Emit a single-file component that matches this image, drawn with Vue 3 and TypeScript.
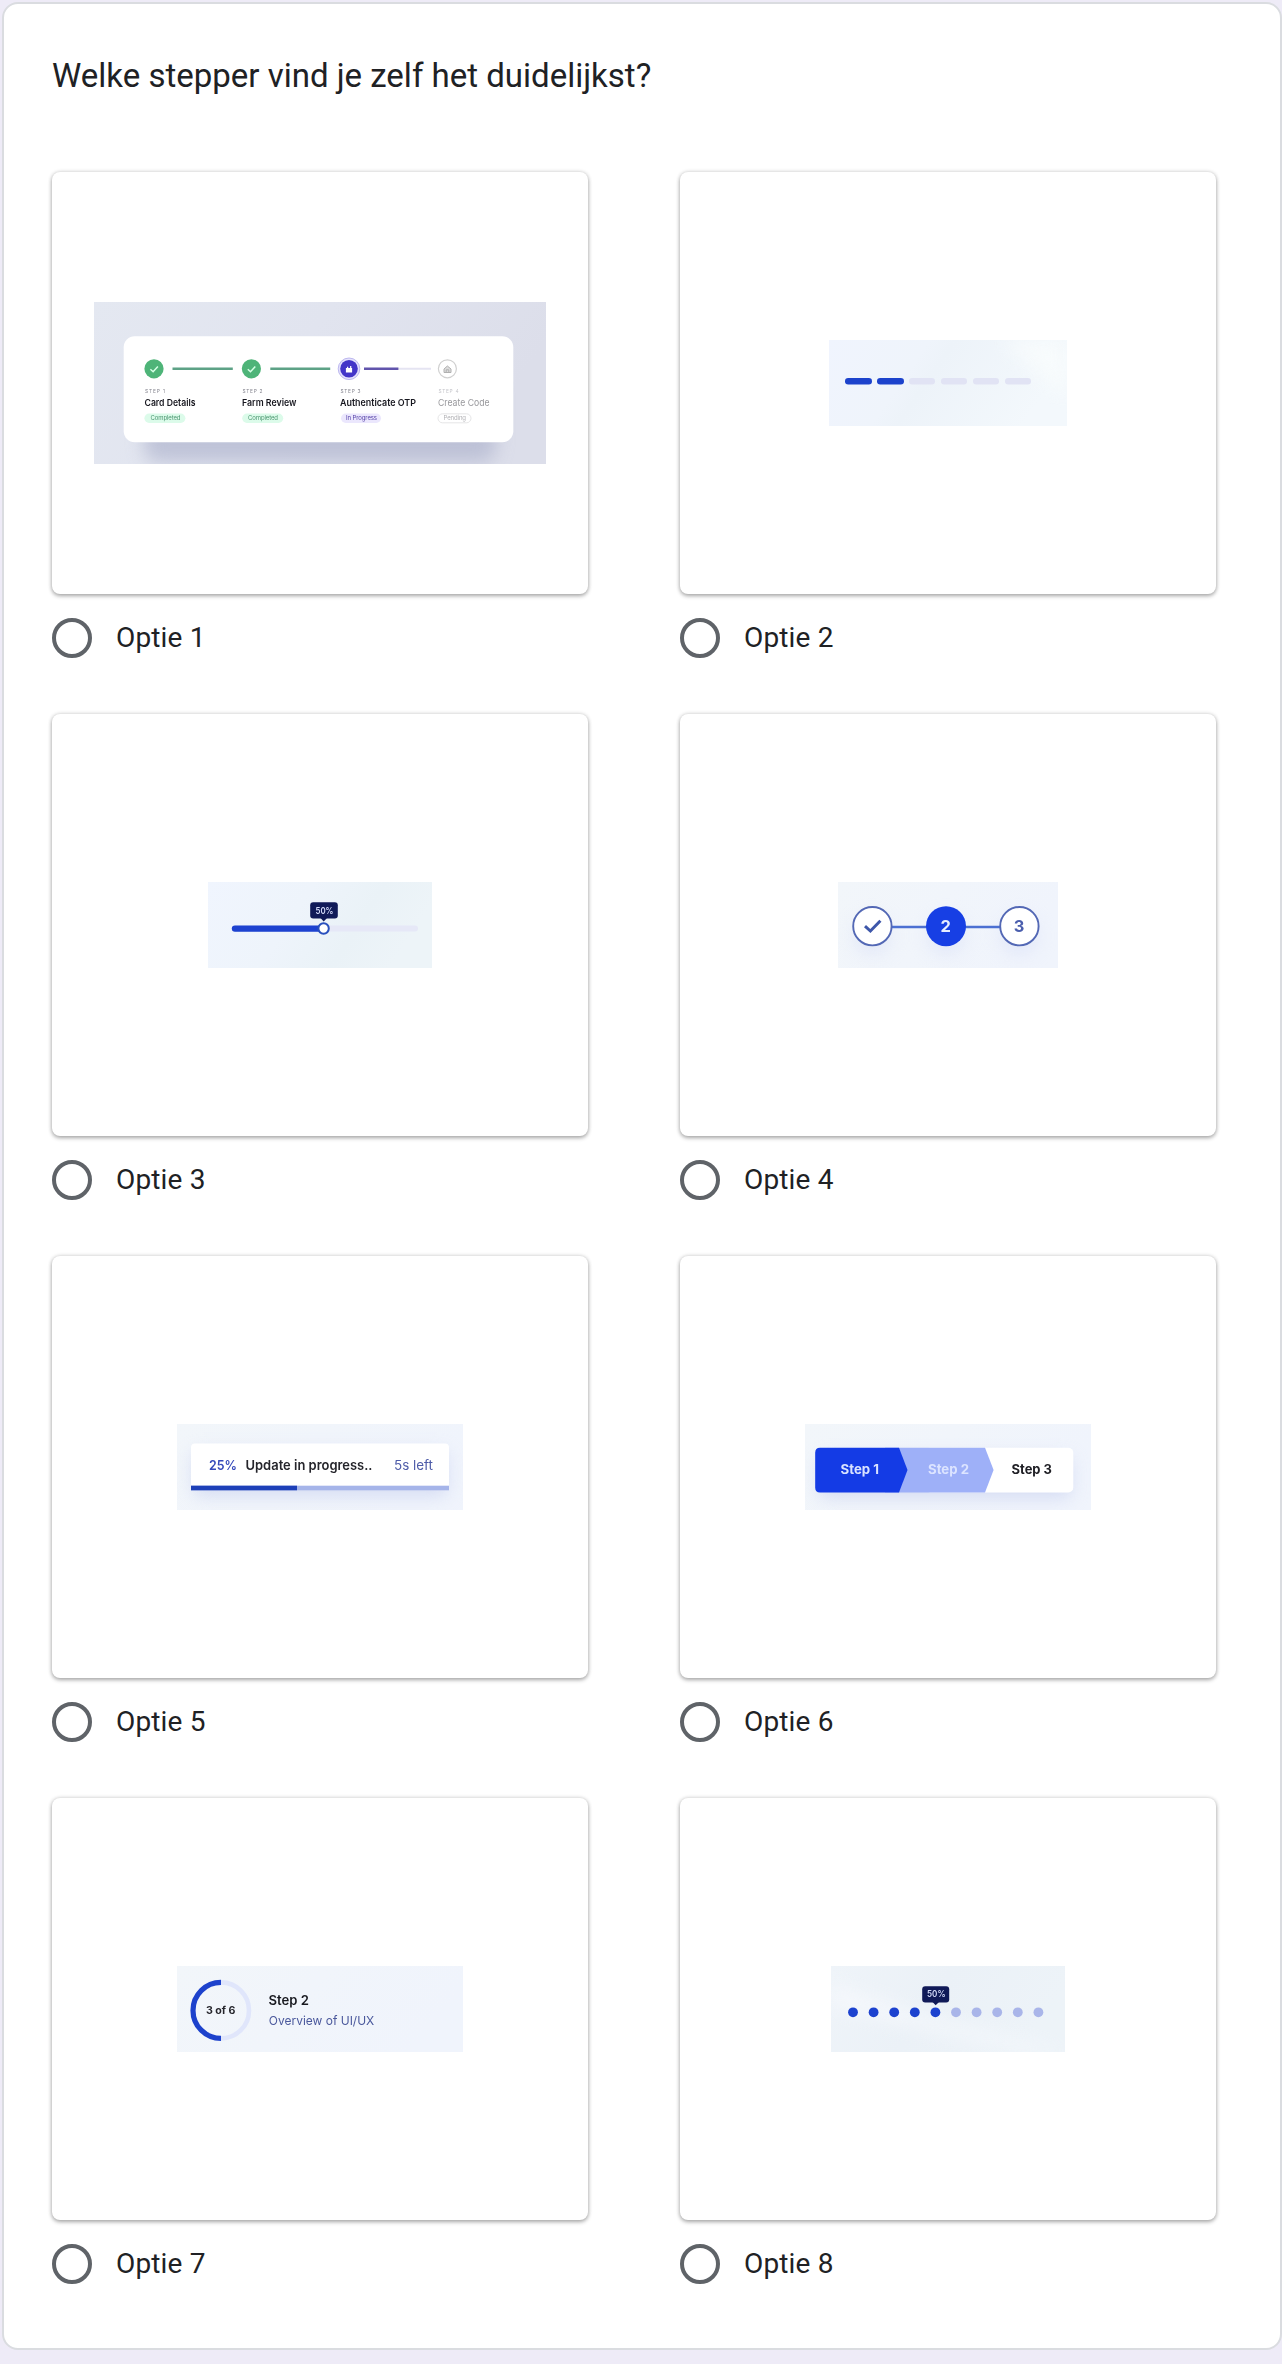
<script setup lang="ts">
interface Option {
  id: number
  width: number
  height: number
}

const options: Option[] = [
  { id: 1, width: 452, height: 162 },
  { id: 2, width: 238, height: 86 },
  { id: 3, width: 224, height: 86 },
  { id: 4, width: 220, height: 86 },
  { id: 5, width: 286, height: 86 },
  { id: 6, width: 286, height: 86 },
  { id: 7, width: 286, height: 86 },
  { id: 8, width: 234, height: 86 },
]

const bars = [16, 48, 80, 112, 144, 176]
const dots = [22, 42.6, 63.2, 83.8, 104.4, 125, 145.6, 166.2, 186.8, 207.4]
</script>

<template>
  <main class="page">
    <section class="question">
      <h1 class="title">Welke stepper vind je zelf het duidelijkst?</h1>
      <div class="grid">
        <div v-for="o in options" :key="o.id" class="option">
          <div class="picture">
            <svg :width="o.width" :height="o.height" :viewBox="`0 0 ${o.width} ${o.height}`">
              <defs>
                <linearGradient :id="`bg${o.id}`" x1="0" y1="0" x2="1" y2="0.25">
                  <template v-if="o.id === 1">
                    <stop offset="0" stop-color="#e4e8f1" />
                    <stop offset="0.5" stop-color="#e1e4ef" />
                    <stop offset="1" stop-color="#dcdeea" />
                  </template>
                  <template v-else-if="o.id === 2">
                    <stop offset="0" stop-color="#f0f4fe" />
                    <stop offset="0.4" stop-color="#eff4fb" />
                    <stop offset="0.5" stop-color="#edf3f9" />
                    <stop offset="1" stop-color="#f3f8fc" />
                  </template>
                  <template v-else-if="o.id === 3">
                    <stop offset="0" stop-color="#f0f5fe" />
                    <stop offset="0.45" stop-color="#eef4fb" />
                    <stop offset="0.75" stop-color="#eaf2f7" />
                    <stop offset="1" stop-color="#edf4f8" />
                  </template>
                  <template v-else-if="o.id === 8">
                    <stop offset="0" stop-color="#eff4f9" />
                    <stop offset="0.5" stop-color="#ebf1f7" />
                    <stop offset="1" stop-color="#edf3f8" />
                  </template>
                  <template v-else>
                    <stop offset="0" stop-color="#f2f6fa" />
                    <stop offset="1" stop-color="#f0f4fc" />
                  </template>
                </linearGradient>
                <filter :id="`soft${o.id}`" x="-5%" y="-20%" width="110%" height="140%" color-interpolation-filters="sRGB">
                  <feGaussianBlur stdDeviation="0.65" />
                </filter>
                <filter :id="`glow${o.id}`" x="-30%" y="-60%" width="160%" height="220%" color-interpolation-filters="sRGB">
                  <feGaussianBlur stdDeviation="9" />
                </filter>
              </defs>
              <rect :width="o.width" :height="o.height" :fill="`url(#bg${o.id})`" />

              <template v-if="o.id === 1">
                <rect x="50" y="76" width="352" height="84" rx="14" fill="#b0b5ce" opacity="0.7" filter="url(#glow1)" />
                <g filter="url(#soft1)">
                  <rect x="29.7" y="34.2" width="389.6" height="106" rx="11" fill="#fff" />
                  <g stroke-width="2.6" fill="none">
                    <path d="M78.5 66.8H138.8M176.3 66.8H236.2" stroke="#5da286" />
                    <path d="M304 66.8H337" stroke="#e5e4f2" stroke-width="2" />
                    <path d="M270 66.8H304.4" stroke="#6154ac" />
                  </g>
                  <circle cx="60" cy="66.8" r="9.6" fill="#4eb478" />
                  <circle cx="157.4" cy="66.8" r="9.6" fill="#4eb478" />
                  <path d="M56.4 67.3L59.1 69.8L63.9 64.6M153.8 67.3L156.5 69.8L161.3 64.6" fill="none" stroke="#d4ffe5" stroke-width="1.5" />
                  <circle cx="255" cy="66.8" r="10.8" fill="#e4e1fc" stroke="#bdb8ef" stroke-width="1" />
                  <circle cx="255" cy="66.8" r="8.8" fill="#4335c8" />
                  <path d="M251.9 66H258.1V70.5H251.9ZM253 66V64.8H254.2V66M256.1 66V64H257.3V66" fill="#fff" />
                  <circle cx="353.4" cy="66.8" r="9" fill="#fff" stroke="#d0d0d0" stroke-width="1.2" />
                  <path d="M350 67L353.4 64L357 67V70.5H350ZM352.2 70V67.8H354.8V70" fill="#ddd" stroke="#b0b0b0" stroke-width="1" />
                  <g class="plain" fill="#85858f" font-size="4.8">
                    <text x="51" y="91.2" textLength="20">STEP 1</text>
                    <text x="148.5" y="91.2" textLength="20">STEP 2</text>
                    <text x="246.5" y="91.2" textLength="20">STEP 3</text>
                    <text x="344.5" y="91.2" textLength="20" fill="#c5c5ca">STEP 4</text>
                  </g>
                  <g class="medium" font-size="9.4" fill="#16161e">
                    <text x="50.5" y="103.9" textLength="51" lengthAdjust="spacingAndGlyphs">Card Details</text>
                    <text x="148" y="103.9" textLength="54.5" lengthAdjust="spacingAndGlyphs">Farm Review</text>
                    <text x="246" y="103.9" textLength="76" lengthAdjust="spacingAndGlyphs">Authenticate OTP</text>
                    <text x="344" y="103.9" textLength="51.5" lengthAdjust="spacingAndGlyphs" class="plain" fill="#98989c">Create Code</text>
                  </g>
                  <rect x="50.4" y="111.6" width="41" height="9.4" rx="4.7" fill="#dcfbea" />
                  <rect x="148.2" y="111.6" width="41" height="9.4" rx="4.7" fill="#dcfbea" />
                  <rect x="247" y="111.6" width="40" height="9.4" rx="4.7" fill="#ebe7fd" />
                  <rect x="344" y="111.8" width="33" height="9" rx="4.5" fill="#fff" stroke="#dedee0" stroke-width="0.8" />
                  <g class="plain" font-size="6">
                    <text x="56.5" y="118.4" textLength="30" fill="#4b9670">Completed</text>
                    <text x="154" y="118.4" textLength="30" fill="#4b9670">Completed</text>
                    <text x="252" y="118.4" textLength="31" fill="#5642a8">In Progress</text>
                    <text x="349.5" y="118.4" textLength="22.5" fill="#b0b0b4">Pending</text>
                  </g>
                </g>
              </template>

              <template v-else-if="o.id === 2">
                <path d="M172 0H238V58Z" fill="#fafdfd" opacity="0.75" filter="url(#glow2)" />
                <g filter="url(#soft2)">
                  <rect v-for="(x, i) in bars" :key="x" :x="x" y="38" :width="i < 2 ? 27 : 26" height="6.4" rx="3.2" :fill="i < 2 ? '#1c42cc' : '#e1e3f4'" />
                </g>
              </template>

              <g v-else-if="o.id === 3" filter="url(#soft3)">
                <path d="M27 46.6H207" stroke="#e6e8f7" stroke-width="6" stroke-linecap="round" />
                <path d="M27 46.6H115" stroke="#1d42d0" stroke-width="6.4" stroke-linecap="round" />
                <rect x="102.2" y="20.3" width="27.6" height="16.2" rx="3" fill="#101a58" />
                <path d="M112.5 36H119L115.7 39.5Z" fill="#101a58" />
                <text x="107.5" y="31.8" class="medium" font-size="9" textLength="18" lengthAdjust="spacingAndGlyphs" fill="#d5dcfa">50%</text>
                <circle cx="115.6" cy="46.5" r="5.2" fill="#fff" stroke="#2950bd" stroke-width="2" />
              </g>

              <template v-else-if="o.id === 4">
                <g fill="#d5dcf5" opacity="0.5" filter="url(#glow4)">
                  <circle cx="34" cy="54" r="19" /><circle cx="108" cy="54" r="19" /><circle cx="181" cy="54" r="19" />
                </g>
                <g filter="url(#soft4)">
                  <path d="M53 45H163" stroke="#4c70d2" stroke-width="2.4" />
                  <circle cx="34.4" cy="44.2" r="19.2" fill="#fff" stroke="#5368b5" stroke-width="1.9" />
                  <circle cx="108" cy="44.2" r="20" fill="#173fe4" />
                  <circle cx="181.4" cy="44.2" r="19.2" fill="#fff" stroke="#5368b5" stroke-width="1.9" />
                  <path d="M27 44.2L32.4 49L42.4 38.8" fill="none" stroke="#3e57aa" stroke-width="3" />
                  <g class="bold" font-size="16.5" text-anchor="middle">
                    <text x="107.8" y="50" fill="#e6ecff">2</text>
                    <text x="181.2" y="50" fill="#4b5fae">3</text>
                  </g>
                </g>
              </template>

              <template v-else-if="o.id === 5">
                <rect x="16" y="28" width="254" height="44" rx="5" fill="#ccd4f0" opacity="0.75" filter="url(#glow5)" />
                <g filter="url(#soft5)">
                  <path d="M14 66V23.5Q14 19.5 18 19.5H268Q272 19.5 272 23.5V66Z" fill="#fff" />
                  <rect x="14" y="61.7" width="258" height="4.6" fill="#a5b4e9" />
                  <rect x="14" y="61.7" width="106" height="4.6" fill="#1d40b8" />
                  <text x="32" y="46.2" class="medium" font-size="13.6" textLength="28" lengthAdjust="spacingAndGlyphs" fill="#3549ba">25%</text>
                  <text x="68.5" y="46.2" class="medium" font-size="13.6" textLength="127" lengthAdjust="spacingAndGlyphs" fill="#25252b">Update in progress..</text>
                  <text x="217" y="46.2" class="plain" font-size="13.6" textLength="39" lengthAdjust="spacingAndGlyphs" fill="#4d5ba8">5s left</text>
                </g>
              </template>

              <template v-else-if="o.id === 6">
                <rect x="14" y="34" width="252" height="40" rx="5" fill="#ccd4f0" opacity="0.75" filter="url(#glow6)" />
                <g filter="url(#soft6)">
                  <rect x="120" y="23.7" width="148.3" height="44.8" rx="5" fill="#fff" />
                  <path d="M80 23.7H180L188.6 46.1L180 68.5H80Z" fill="#9eb0f8" />
                  <path d="M15 23.7H94L102.5 46.1L94 68.5H15Q10.2 68.5 10.2 63.5V28.7Q10.2 23.7 15 23.7Z" fill="#143be5" />
                  <g class="bold" font-size="13">
                    <text x="35.5" y="50.3" textLength="38.5" lengthAdjust="spacingAndGlyphs" fill="#d9e3ff">Step 1</text>
                    <text x="123" y="50.3" textLength="41" lengthAdjust="spacingAndGlyphs" fill="#dce4ff">Step 2</text>
                    <text x="206.5" y="50.3" textLength="40.5" lengthAdjust="spacingAndGlyphs" fill="#202026">Step 3</text>
                  </g>
                </g>
              </template>

              <g v-else-if="o.id === 7" filter="url(#soft7)">
                <path d="M44 16.4A28 28 0 0 1 44 72.4" fill="none" stroke="#e0e6fb" stroke-width="4.6" />
                <path d="M44 16.4A28 28 0 0 0 44 72.4" fill="none" stroke="#1d42cc" stroke-width="5.2" />
                <text x="29" y="48" class="bold" font-size="9.8" textLength="29.5" lengthAdjust="spacingAndGlyphs" fill="#25252b">3 of 6</text>
                <text x="91.5" y="39.3" class="medium" font-size="13" textLength="40.5" lengthAdjust="spacingAndGlyphs" fill="#18191f">Step 2</text>
                <text x="91.8" y="58.7" class="plain" font-size="12" textLength="105.5" lengthAdjust="spacingAndGlyphs" fill="#4a589c">Overview of UI/UX</text>
              </g>

              <template v-else>
                <path d="M0 18Q100 55 234 86H200Q100 65 0 40Z" fill="#fbfcff" opacity="0.6" filter="url(#glow8)" />
                <g filter="url(#soft8)">
                  <circle v-for="(x, i) in dots" :key="x" :cx="x" cy="46.3" r="4.9" :fill="i < 5 ? '#1c42cf' : '#a9b5e9'" />
                  <rect x="91.2" y="20.2" width="27" height="16.2" rx="3" fill="#101a58" />
                  <path d="M101.5 36H108L104.7 39.3Z" fill="#101a58" />
                  <text x="96" y="31.4" class="medium" font-size="8.5" textLength="18.5" lengthAdjust="spacingAndGlyphs" fill="#d5dcfa">50%</text>
                </g>
              </template>
            </svg>
          </div>
          <label class="choice">
            <span class="radio"></span>
            <span>Optie {{ o.id }}</span>
          </label>
        </div>
      </div>
    </section>
  </main>
</template>

<style>
body {
  background: #eeebf7;
}
</style>

<style scoped>
.page {
  box-sizing: border-box;
  width: 1282px;
  height: 2364px;
  padding: 2px 0 0 2px;
  background: #eeebf7;
  font-family: Roboto, sans-serif;
  color: #202124;
}
.question {
  box-sizing: border-box;
  width: 1280px;
  height: 2348px;
  padding: 48px;
  border: 2px solid #dadce0;
  border-radius: 16px;
  background: #fff;
}
.title {
  margin: 0;
  height: 120px;
  font-size: 33px;
  font-weight: 400;
  line-height: 48px;
  white-space: nowrap;
}
.grid {
  display: grid;
  grid-template-columns: 536px 536px;
  grid-auto-rows: 542px;
  column-gap: 92px;
}
.picture {
  display: flex;
  align-items: center;
  justify-content: center;
  height: 422px;
  border-radius: 8px;
  background: #fff;
  box-shadow: 0 2px 4px rgba(0, 0, 0, 0.3), 0 0 4px rgba(0, 0, 0, 0.16);
}
.picture svg {
  display: block;
}
.choice {
  display: flex;
  align-items: center;
  gap: 24px;
  height: 40px;
  margin-top: 24px;
  font-size: 28px;
  line-height: 40px;
  letter-spacing: 0.15px;
}
.radio {
  box-sizing: border-box;
  width: 40px;
  height: 40px;
  border: 4px solid #5f6368;
  border-radius: 50%;
}
.plain {
  font-family: Inter, sans-serif;
  font-weight: 400;
}
.medium {
  font-family: Inter, sans-serif;
  font-weight: 600;
}
.bold {
  font-family: Inter, sans-serif;
  font-weight: 700;
}
</style>
